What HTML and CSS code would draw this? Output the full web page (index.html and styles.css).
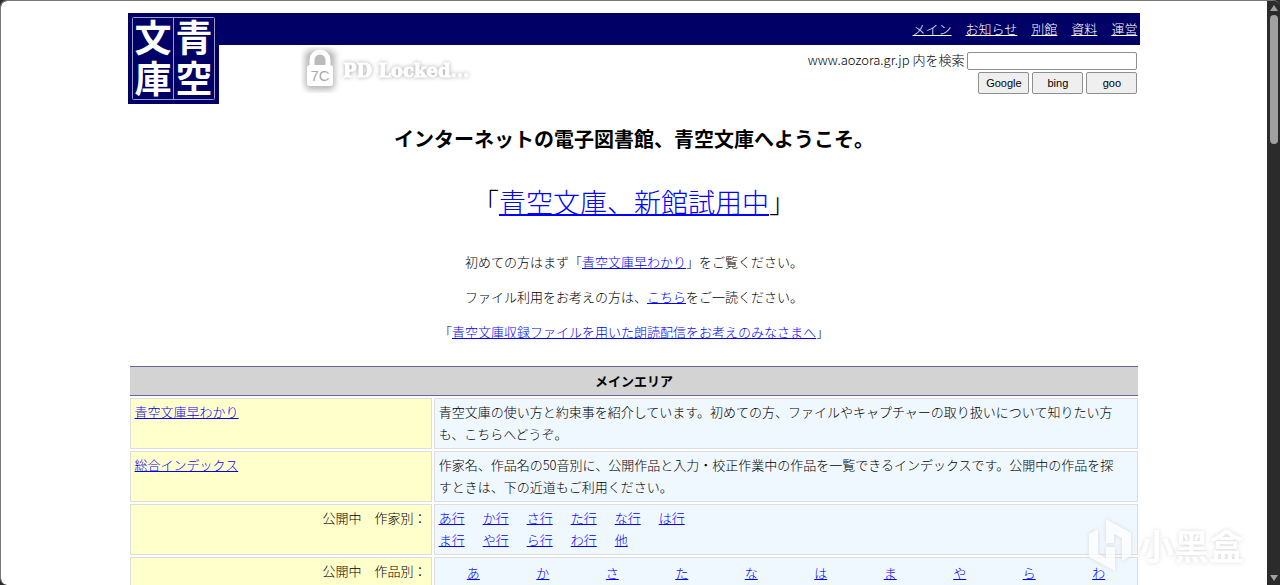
FILE: index.html
```html
<!DOCTYPE html>
<html lang="ja">
<head>
    <meta charset="UTF-8">
    <meta name="viewport" content="width=device-width, initial-scale=1.0">
    <title>青空文庫 Aozora Bunko</title>
    <link rel="stylesheet" href="styles.css">
</head>
<body>
    <div class="window">
        <div class="page">
            <div class="container">
                <header class="header">
                    <svg class="logo" viewBox="0 0 91 91" role="img" aria-label="青空文庫">
                        <rect width="91" height="91" fill="#000066"/>
                        <rect x="4.5" y="4.5" width="82" height="82" rx="1" fill="none" stroke="#9a9acb"/>
                        <path d="M45.5 4.5v82" stroke="#9a9acb"/>
                        <g class="logo-text">
                            <text x="25" y="39">文</text>
                            <text x="66" y="39">青</text>
                            <text x="25" y="80">庫</text>
                            <text x="66" y="80">空</text>
                        </g>
                    </svg>
                    <div class="header-main">
                        <nav class="nav">
                            <a href="#main">メイン</a>
                            <a href="#info">お知らせ</a>
                            <a href="#annex">別館</a>
                            <a href="#shiryo">資料</a>
                            <a href="#unei">運営</a>
                        </nav>
                        <div class="tools">
                            <svg class="locked" viewBox="0 0 184 46" role="img" aria-label="PD Locked">
                                <defs>
                                    <filter id="soft" x="-30%" y="-30%" width="160%" height="160%">
                                        <feGaussianBlur stdDeviation="3"/>
                                    </filter>
                                </defs>
                                <rect x="4" y="3" width="30" height="40" rx="6" fill="#999" opacity="0.7" filter="url(#soft)"/>
                                <path d="M11 20v-7a8 8 0 0 1 16 0v7" fill="#bbb" stroke="#fff" stroke-width="5"/>
                                <rect x="6" y="18" width="26" height="21" rx="3" fill="#fff"/>
                                <text class="locked-num" x="19" y="34">7C</text>
                                <text class="locked-text" x="42" y="30">PD Locked...</text>
                            </svg>
                            <!-- site search -->
                            <form class="search">
                                <div class="search-row">
                                    <label for="q">www.aozora.gr.jp 内を検索</label>
                                    <input type="text" id="q" name="q">
                                </div>
                                <div class="search-row">
                                    <button type="button">Google</button>
                                    <button type="button">bing</button>
                                    <button type="button">goo</button>
                                </div>
                            </form>
                        </div>
                    </div>
                </header>

                <div class="intro">
                    <h1>インターネットの電子図書館、青空文庫へようこそ。</h1>
                    <p class="shinkan">「<a href="#new">青空文庫、新館試用中</a>」</p>
                    <p>初めての方はまず「<a href="#guide">青空文庫早わかり</a>」をご覧ください。</p>
                    <p>ファイル利用をお考えの方は、<a href="#kijyunn">こちら</a>をご一読ください。</p>
                    <p>「<a href="#roudoku">青空文庫収録ファイルを用いた朗読配信をお考えのみなさまへ</a>」</p>
                </div>

                <table class="area" id="main">
                    <colgroup>
                        <col class="col-name">
                        <col>
                    </colgroup>
                    <thead>
                        <tr>
                            <th colspan="2">メインエリア</th>
                        </tr>
                    </thead>
                    <tbody>
                        <tr>
                            <td class="name"><a href="#guide">青空文庫早わかり</a></td>
                            <td class="desc">青空文庫の使い方と約束事を紹介しています。初めての方、ファイルやキャプチャーの取り扱いについて知りたい方<br>も、こちらへどうぞ。</td>
                        </tr>
                        <tr>
                            <td class="name"><a href="#index">総合インデックス</a></td>
                            <td class="desc">作家名、作品名の50音別に、公開作品と入力・校正作業中の作品を一覧できるインデックスです。公開中の作品を探<br>すときは、下の近道もご利用ください。</td>
                        </tr>
                        <tr>
                            <td class="name right">公開中　作家別：</td>
                            <td class="desc">
                                <div class="gyo">
                                    <a href="#a">あ行</a>
                                    <a href="#ka">か行</a>
                                    <a href="#sa">さ行</a>
                                    <a href="#ta">た行</a>
                                    <a href="#na">な行</a>
                                    <a href="#ha">は行</a>
                                </div>
                                <div class="gyo">
                                    <a href="#ma">ま行</a>
                                    <a href="#ya">や行</a>
                                    <a href="#ra">ら行</a>
                                    <a href="#wa">わ行</a>
                                    <a href="#other">他</a>
                                </div>
                            </td>
                        </tr>
                        <tr>
                            <td class="name right">公開中　作品別：</td>
                            <td class="desc">
                                <div class="kana">
                                    <a href="#s-a">あ</a>
                                    <a href="#s-ka">か</a>
                                    <a href="#s-sa">さ</a>
                                    <a href="#s-ta">た</a>
                                    <a href="#s-na">な</a>
                                    <a href="#s-ha">は</a>
                                    <a href="#s-ma">ま</a>
                                    <a href="#s-ya">や</a>
                                    <a href="#s-ra">ら</a>
                                    <a href="#s-wa">わ</a>
                                </div>
                            </td>
                        </tr>
                    </tbody>
                </table>
            </div>
        </div>
        <div class="scrollbar">
            <span class="arrow up"></span>
            <span class="thumb"></span>
            <span class="arrow down"></span>
        </div>
    </div>
    <div class="watermark">
        <svg class="mark" viewBox="0 0 42 52">
            <path d="M0 15l9-5v25l8 4V28h9v24L0 38z"/>
            <path d="M17 0l25 14v23l-9 5V19l-8-4v9h-8z"/>
        </svg>
        <span>小黑盒</span>
    </div>
</body>
</html>
```

FILE: styles.css
```css
body {
    margin: 0;
    background-color: #2b2b2b;
    font-family: "Noto Sans CJK JP", sans-serif;
    font-size: 13px;
    font-weight: 300;
    line-height: 22px;
    color: #000;
}
a {
    color: #0000ff;
    text-underline-offset: 1px;
}
.window {
    display: flex;
    box-sizing: border-box;
    height: 100vh;
    border-top: 1px solid #777;
    border-left: 1px solid #777;
    border-radius: 7px;
    overflow: hidden;
}
.page {
    flex: 1;
    background-color: #fff;
    border-radius: 6px 0 0 6px;
    overflow: hidden;
}
.container {
    width: 80%;
    margin: 12px auto 0;
}
.header {
    display: flex;
}
.logo {
    width: 91px;
    height: 91px;
}
.logo-text {
    fill: #fff;
    font-size: 37px;
    font-weight: bold;
    text-anchor: middle;
}
.header-main {
    flex: 1;
}
.nav {
    display: flex;
    justify-content: flex-end;
    gap: 14px;
    padding: 5px 3px;
    background-color: #000066;
}
.nav a {
    color: #fff;
}
.tools {
    display: flex;
    justify-content: space-between;
    padding: 2px 3px 0 82px;
}
.locked {
    width: 184px;
    height: 46px;
}
.locked-num {
    font-family: "Liberation Sans", sans-serif;
    font-size: 15px;
    fill: #aaa;
    text-anchor: middle;
}
.locked-text {
    font-family: "DejaVu Serif", serif;
    font-size: 18px;
    font-weight: bold;
    fill: #fff;
    stroke: #fff;
    filter: drop-shadow(0 0 2px #aaa);
}
.search {
    display: flex;
    flex-direction: column;
    gap: 2px;
    padding-top: 5px;
}
.search-row {
    display: flex;
    justify-content: flex-end;
    gap: 3px;
}
.search label {
    line-height: 16px;
}
.search input {
    box-sizing: border-box;
    width: 170px;
    height: 18px;
    border: 1px solid #8f8f8f;
    border-radius: 2px;
}
.search button {
    width: 51px;
    height: 22px;
    padding: 0;
    border: 1px solid #8f8f8f;
    border-radius: 2px;
    background-color: #efefef;
    color: #000;
    font-family: "Liberation Sans", Arial, sans-serif;
    font-size: 11px;
}
.intro {
    text-align: center;
}
.intro h1 {
    margin: 20px 0 0;
    font-size: 20px;
    line-height: 30px;
    color: #000;
}
.intro p {
    margin: 13px 0;
}
.intro .shinkan {
    margin: 28px 0 29px;
    font-size: 27px;
    line-height: 40px;
}
.area {
    width: 100%;
    margin-top: 21px;
    border-spacing: 2px;
    table-layout: fixed;
}
.col-name {
    width: 30%;
}
.area th {
    padding: 3px 4px;
    border-top: 1px solid #6666a3;
    border-bottom: 1px solid #6666a3;
    background-color: #d3d3d3;
    color: #000;
    font-weight: bold;
}
.area td {
    padding: 2px 4px 3px;
    border: 1px solid #ddd;
    vertical-align: top;
}
.area .name {
    background-color: #ffffcc;
}
.area .desc {
    background-color: #f0f8ff;
}
.area .right {
    text-align: right;
}
.gyo {
    display: flex;
    gap: 18px;
}
.kana {
    display: grid;
    grid-template-columns: repeat(10, 1fr);
    padding: 2px 0;
    text-align: center;
}
.scrollbar {
    display: flex;
    flex-direction: column;
    align-items: center;
    width: 13px;
    padding: 4px 0;
    background-color: #2b2b2b;
    box-sizing: border-box;
}
.arrow {
    border-left: 4px solid transparent;
    border-right: 4px solid transparent;
}
.up {
    border-bottom: 6px solid #a0a0a0;
}
.down {
    margin-top: auto;
    border-top: 6px solid #a0a0a0;
}
.thumb {
    width: 8px;
    height: 129px;
    margin-top: 4px;
    border-radius: 4px;
    background-color: #a0a0a0;
}
/* floats over the lower right corner of the page */
.watermark {
    position: absolute;
    right: 36px;
    bottom: 14px;
    display: flex;
    align-items: center;
    gap: 8px;
    color: #fff;
    font-size: 35px;
    font-weight: bold;
    line-height: 52px;
    opacity: 0.7;
    filter: drop-shadow(0 0 2px #ccc);
}
.mark {
    width: 42px;
    height: 52px;
    fill: #fff;
}
```
